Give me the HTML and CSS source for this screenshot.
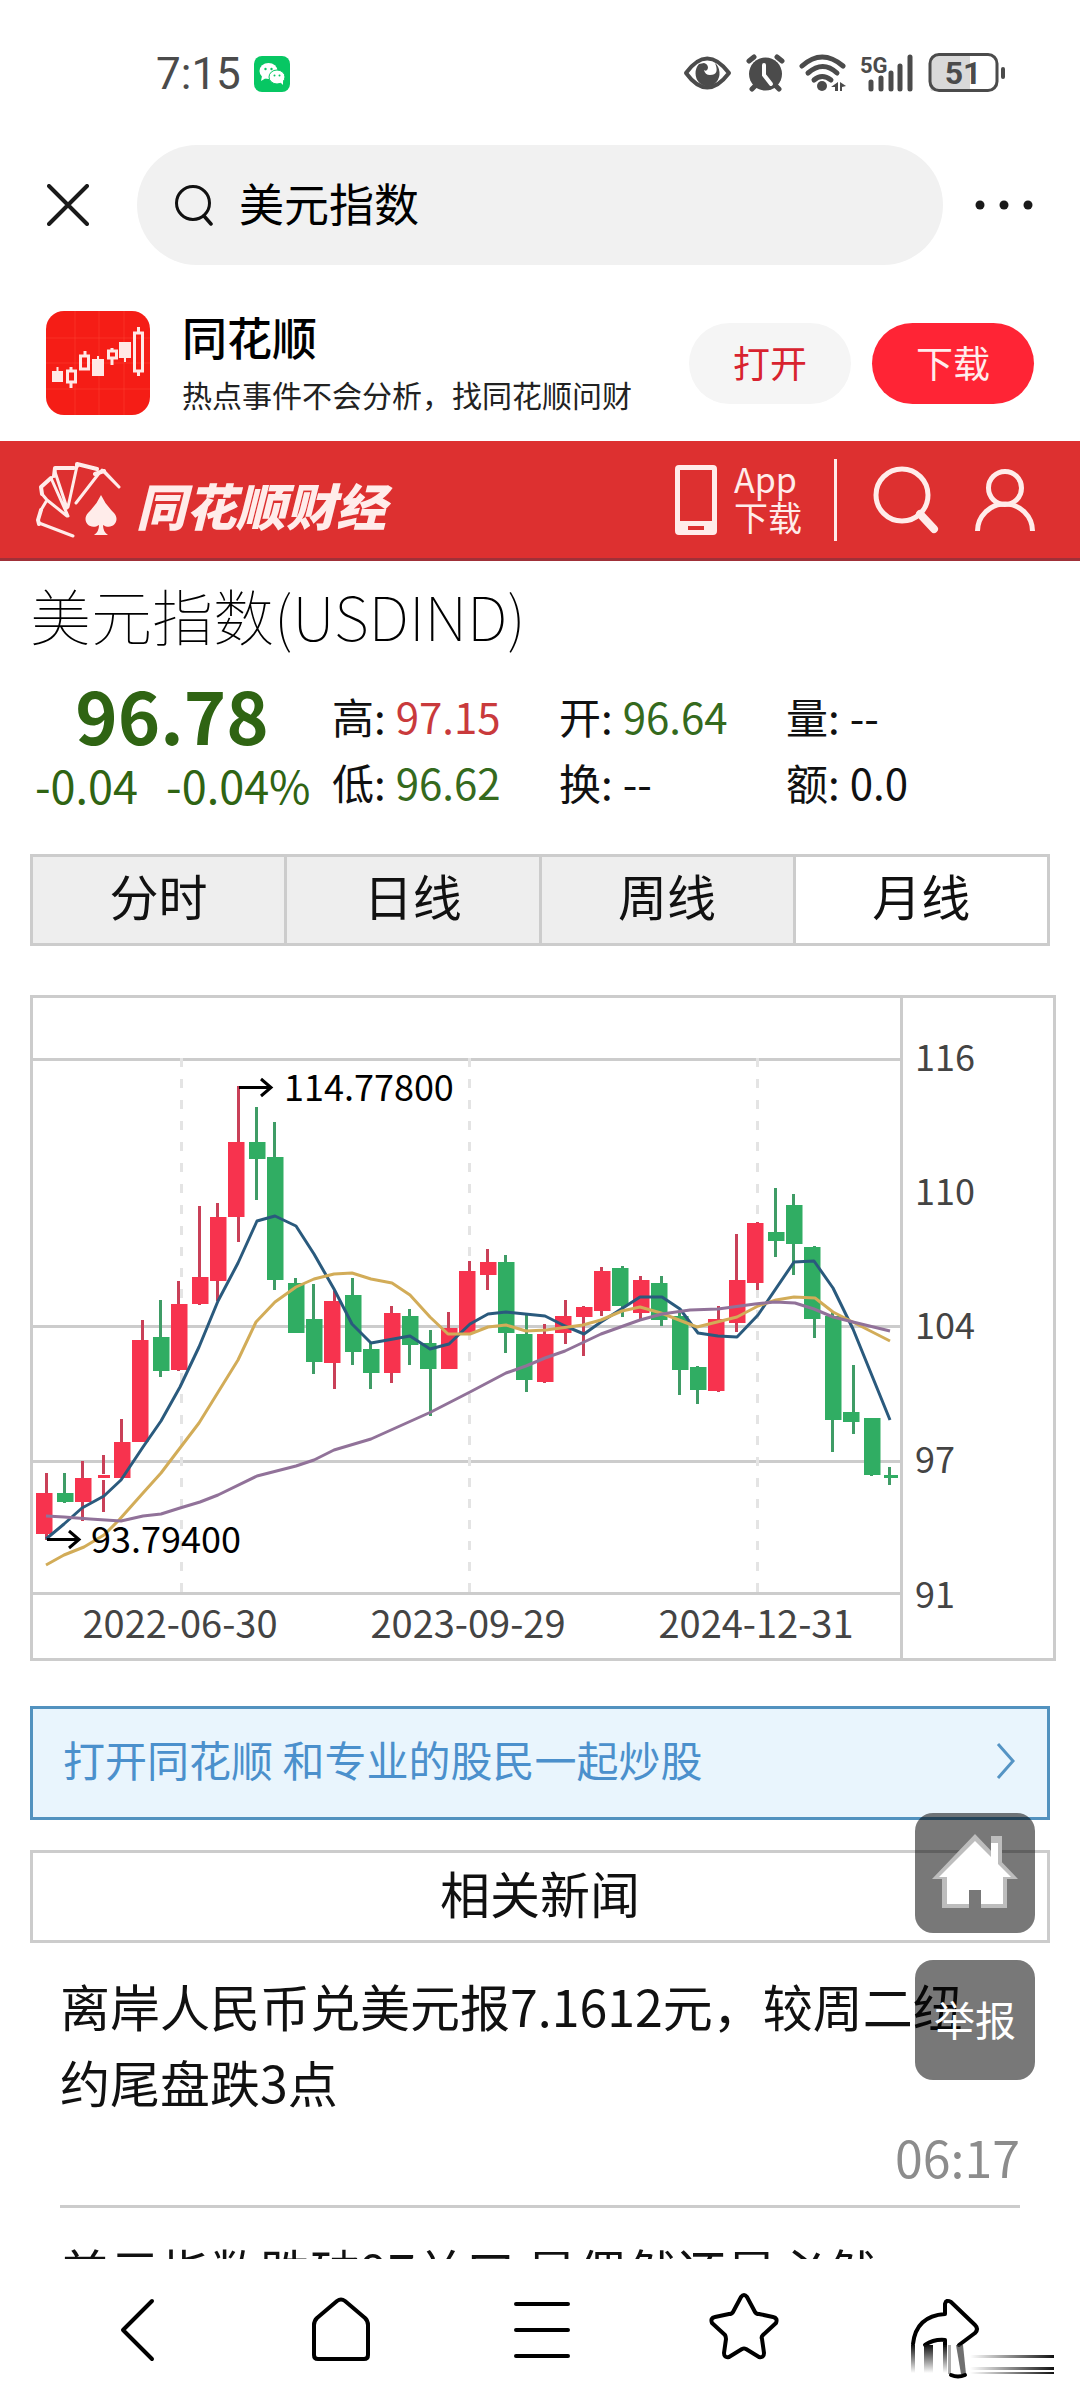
FILE: index.html
```html
<!DOCTYPE html>
<html lang="zh-CN">
<head>
<meta charset="utf-8">
<meta name="viewport" content="width=device-width">
<title>美元指数</title>
<link rel="stylesheet" href="styles.css">
</head>
<body>
<div class="app">
  <div class="status">
    <span class="clock">7:15</span>
    <svg class="wechat" viewBox="0 0 36 36" width="36" height="36" aria-hidden="true">
      <rect width="36" height="36" rx="8" fill="#07c763"/>
      <ellipse cx="14.500" cy="15" rx="9" ry="8" fill="#fff"/><path d="M8 20l-1 5 5-3z" fill="#fff"/>
      <ellipse cx="23" cy="21" rx="8" ry="7" fill="#fff" stroke="#07c763"/><path d="M26 26l3 3v-5z" fill="#fff"/>
      <g fill="#07c763"><circle cx="11.500" cy="13" r="1.200"/><circle cx="17.500" cy="13" r="1.200"/><circle cx="20.500" cy="19.500" r="1"/><circle cx="25.500" cy="19.500" r="1"/></g>
    </svg>
    <svg class="indicators" viewBox="682 50 326 48" width="326" height="48" role="img" aria-label="5G 51%">
      <g fill="none" stroke="#4b4b4b" stroke-width="4" stroke-linecap="round" stroke-linejoin="round">
        <path d="M686 73q21-29 43 0q-22 29-43 0z"/>
        <path d="M749 61l5-4M782 61l-5-4" stroke-width="5"/>
        <path d="M752 89l6-6M779 89l-6-6" stroke-width="5"/>
        <path d="M802 66q20-18 41 0" stroke-width="5"/><path d="M808 73q15-13 29 0" stroke-width="5"/><path d="M814 80q8-7 17 0" stroke-width="5"/>
        <path d="M871 82v7M881 78v11M891 73v16M900 66v23M910 57v32" stroke-width="5"/>
      </g>
      <path d="M699 64a12 13 0 1 0 16-1q5 12-5 12q-5 0-6-5 3 2 4-2 0-4-4-5z" fill="#4b4b4b"/>
      <circle cx="765.500" cy="74" r="16.500" fill="#4b4b4b"/>
      <path d="M764 65v10l7 9" fill="none" stroke="#fff" stroke-width="4" stroke-linecap="round"/>
      <circle cx="822" cy="86" r="5" fill="#4b4b4b"/>
      <path d="M831 87l7-5v9h-3v-4zM840 82l6 4-4 1v4h-2z" fill="#4b4b4b"/>
      <text x="860" y="73" class="net">5G</text>
      <path d="M932 56h38v35h-38q-2 0-2-6V62q0-6 2-6z" fill="#d9d9d9"/>
      <rect x="930" y="54.500" width="67" height="36" rx="9" fill="none" stroke="#4b4b4b" stroke-width="3"/>
      <rect x="1001" y="67" width="4" height="12" rx="2" fill="#4b4b4b"/>
      <text x="963" y="84" text-anchor="middle" class="battery">51</text>
    </svg>
  </div>

  <header class="search-row">
    <button class="plain" aria-label="关闭"><svg viewBox="0 0 42 42" width="42" height="42"><path d="M2 2l38 38M40 2L2 40" stroke="#1a1a1a" stroke-width="4" stroke-linecap="round"/></svg></button>
    <div class="search">
      <svg viewBox="0 0 38 42" width="38" height="42" aria-hidden="true"><circle cx="18" cy="19" r="16.500" fill="none" stroke="#111" stroke-width="3"/><path d="M29 32l7 8" stroke="#111" stroke-width="3.500" stroke-linecap="round"/></svg>
      <input type="text" aria-label="搜索" value="美元指数">
    </div>
    <button class="plain" aria-label="更多"><svg viewBox="0 0 58 10" width="58" height="10"><g fill="#1a1a1a"><circle cx="5" cy="5" r="4.500"/><circle cx="29" cy="5" r="4.500"/><circle cx="53" cy="5" r="4.500"/></g></svg></button>
  </header>

  <main class="page">
    <section class="banner">
      <svg viewBox="0 0 104 104" width="104" height="104" aria-hidden="true">
        <rect width="104" height="104" rx="18" fill="#f51d16"/>
        <path d="M0 27h104M0 52h104M0 78h104M29 0v104M53 0v104M78 0v104" stroke="#ff4434" stroke-opacity=".5"/>
        <g fill="#ffe9e6"><path d="M6 60h11v11H6zM10.500 56h2v5h-2zM46 48h12v17H46zM51 45h2v4h-2zM73 31h12v16H73zM78 46h2v5h-2z"/></g>
        <g fill="none" stroke="#ffe9e6" stroke-width="3"><path d="M21.500 60h8v11h-8zM25 56v4M25 72v5M34.500 45h8v13h-8zM39 40v5M62.500 40h8v7h-8zM66 37v3M66 48v6M88.500 22h8v38h-8zM92.500 16v6M92.500 60v5"/></g>
      </svg>
      <div class="banner-text">
        <h2>同花顺</h2>
        <p>热点事件不会分析，找同花顺问财</p>
      </div>
      <button class="pill">打开</button>
      <button class="pill pill-red">下载</button>
    </section>

    <nav class="site-bar">
      <a class="brand" href="#">
        <svg viewBox="0 0 90 76" width="90" height="76" aria-hidden="true">
          <g fill="none" stroke="#ffecea" stroke-linejoin="round" stroke-linecap="round">
            <path stroke-width="4" d="M7 48L4 58l1 4M8 32l-1-7 10-9M20 14l1-8h19M43 4v-2l20 5M61 12l9-3"/>
            <path stroke-width="3" d="M39 74L5 61M7 48l6-10M8 32l5 6L33 54M17 16l17 38M21 10L33 46M43 4L34 45M42 41L66 10M70 9l15 16M68 8l17 17"/>
          </g>
          <path d="M67 33q4 9 13 18c7 8-2 18-11 12q0 7 5 10H60q5-3 5-10c-9 6-18-4-11-12q9-9 13-18z" fill="#ffecea"/>
        </svg>
        <span>同花顺财经</span>
      </a>
      <a class="app-link" href="#">
        <svg viewBox="0 0 42 70" width="42" height="70" aria-hidden="true"><path fill-rule="evenodd" d="M4 0h34q4 0 4 4v62q0 4-4 4H4q-4 0-4-4V4q0-4 4-4zM5 5v51h32V5zM13 61v4h16v-4z" fill="#ffecea"/></svg>
        <span>App<br>下载</span>
      </a>
      <a class="bar-icon" href="#" aria-label="搜索"><svg viewBox="0 0 66 68" width="66" height="68"><circle cx="29" cy="29" r="26" fill="none" stroke="#ffecea" stroke-width="5"/><path d="M47 48L61 63" fill="none" stroke="#ffecea" stroke-width="8" stroke-linecap="round"/></svg></a>
      <a class="bar-icon" href="#" aria-label="我的"><svg viewBox="0 0 60 62" width="60" height="62"><g fill="none" stroke="#ffecea" stroke-width="5"><circle cx="30" cy="19" r="16.500"/><path d="M2.500 62a27.500 27 0 0 1 55 0"/></g></svg></a>
    </nav>

    <h1 class="title">美元指数(USDIND)</h1>

    <section class="quote">
      <div class="last">
        <strong>96.78</strong>
        <div class="change"><span>-0.04</span><span>-0.04%</span></div>
      </div>
      <dl class="stats">
        <div><dt>高:</dt><dd class="up">97.15</dd></div>
        <div><dt>开:</dt><dd class="down">96.64</dd></div>
        <div><dt>量:</dt><dd>--</dd></div>
        <div><dt>低:</dt><dd class="down">96.62</dd></div>
        <div><dt>换:</dt><dd>--</dd></div>
        <div><dt>额:</dt><dd>0.0</dd></div>
      </dl>
    </section>

    <div class="tabs">
      <button>分时</button><button>日线</button><button>周线</button><button class="active">月线</button>
    </div>

    <svg class="chart" viewBox="30 995 1026 666" role="img" aria-label="美元指数月线图">
      <g class="grid">
        <path d="M31.500 996.500h1023v663h-1023z"/>
        <path d="M901.500 998v661M33 1059.500h868M33 1326.500h868M33 1461.500h868M33 1593.500h868"/>
      </g>
      <path class="dash" d="M181.500 1058v535M469.500 1058v535M757.500 1058v535"/>
      <g class="red">
        <path class="wick" d="M46.500 1473v67M82.500 1461v60M103.500 1455v19M103.500 1480v32M121.500 1419v59M142.500 1320v30M178.500 1281v90M199.500 1206v99M217.500 1203v98M238.500 1086v156M334.500 1291v98M391.500 1306v77M448.500 1312v30M469.500 1261v30M487.500 1249v41M544.500 1324v59M565.500 1300v44M583.500 1306v50M601.500 1267v49M640.500 1276v44M718.500 1306v86M736.500 1234v98M757.500 1222v68"/>
        <path d="M36 1493h16.500v41H36zM75 1478h16.500v24H75zM98 1475h12v3H98zM114 1442h16.500v36H114zM132 1340h16.500v102H132zM171 1304h16.500v66H171zM192 1277h16.500v27H192zM210 1217h16.500v64H210zM228 1142h16.500v75H228zM324 1301h16.500v62H324zM384 1313h16.500v60H384zM441 1328h16.500v41H441zM459 1271h16.500v62H459zM480 1262h16.500v13H480zM537 1334h16.500v48H537zM555 1316h16.500v17H555zM576 1307h16.500v10H576zM594 1271h16.500v40H594zM633 1280h16.500v33H633zM708 1319h16.500v72H708zM729 1280h16.500v43H729zM747 1223h16.500v60H747z"/>
      </g>
      <g class="green">
        <path class="wick" d="M64.500 1473v30M160.500 1300v77M256.500 1107v93M274.500 1122v168M295.500 1278v30M313.500 1284v90M352.500 1278v87M370.500 1343v46M409.500 1309v56M430.500 1330v86M505.500 1255v98M526.500 1315v77M622.500 1266v51M661.500 1276v50M679.500 1313v82M697.500 1366v38M775.500 1188v69M793.500 1194v81M814.500 1246v92M832.500 1312v140M853.500 1365v69M871.500 1450v26M889.500 1467v18"/>
        <path d="M57 1493h16.500v9H57zM153 1337h16.500v34H153zM249 1142h16.500v17H249zM267 1157h16.500v123H267zM288 1283h16.500v50H288zM306 1319h16.500v43H306zM345 1295h16.500v57H345zM363 1349h16.500v24H363zM402 1316h16.500v29H402zM420 1343h16.500v26H420zM498 1262h16.500v71H498zM516 1334h16.500v46H516zM612 1268h16.500v38H612zM651 1283h16.500v37H651zM672 1316h16.500v54H672zM690 1367h16.500v23H690zM768 1232h16.500v9H768zM786 1205h16.500v39H786zM804 1247h16.500v72H804zM825 1316h16.500v104H825zM843 1412h16.500v10H843zM864 1418h16.500v57H864zM884 1475h14v3H884z"/>
      </g>
      <g class="ma">
        <polyline stroke="#2a5a7d" points="46,1539 64,1524 82,1508 104,1496 121,1480 143,1447 161,1421 180,1387 199,1347 218,1301 238,1263 257,1221 275,1216 296,1226 314,1254 334,1289 352,1324 371,1343 410,1336 430,1349 449,1344 470,1324 488,1314 506,1312 545,1316 565,1326 584,1334 601,1322 640,1297 662,1297 680,1309 698,1333 718,1336 737,1337 758,1315 794,1262 814,1261 833,1288 853,1329 890,1420"/>
        <polyline stroke="#d2ac58" points="46,1565 64,1555 84,1547 104,1535 119,1520 143,1493 161,1473 199,1423 238,1360 256,1322 275,1302 296,1287 314,1279 334,1274 352,1273 371,1279 392,1283 410,1295 430,1317 448,1334 470,1334 488,1327 506,1325 526,1331 546,1330 583,1325 601,1320 622,1311 640,1307 661,1313 697,1327 737,1317 758,1306 776,1300 794,1297 815,1298 833,1312 890,1341"/>
        <polyline stroke="#917299" points="46,1516 64,1517 90,1519 121,1521 143,1516 161,1514 180,1508 200,1502 218,1495 257,1476 296,1466 314,1460 334,1450 371,1439 431,1412 470,1392 506,1373 526,1366 545,1358 565,1351 601,1334 640,1320 662,1314 690,1310 718,1309 755,1304 775,1302 795,1303 814,1309 833,1317 853,1322 890,1331"/>
      </g>
      <path class="arrow" d="M239 1087.500h32M261 1079l10 8.500-10 8.500M47 1539.500h32M69 1531l10 8.500-10 8.500"/>
      <g class="mark"><text x="284" y="1101">114.77800</text><text x="91" y="1553">93.79400</text></g>
      <g class="axis">
        <text x="915" y="1071">116</text><text x="915" y="1205">110</text><text x="915" y="1339">104</text><text x="915" y="1473">97</text><text x="915" y="1608">91</text>
      </g>
      <g class="dates">
        <text x="180" y="1638">2022-06-30</text><text x="468" y="1638">2023-09-29</text><text x="756" y="1638">2024-12-31</text>
      </g>
    </svg>

    <a class="promo" href="#">打开同花顺 和专业的股民一起炒股
      <svg viewBox="0 0 20 38" width="20" height="38" aria-hidden="true"><path d="M2 2l15 17L2 36" fill="none" stroke="#5594c4" stroke-width="3"/></svg>
    </a>

    <section class="news">
      <h2>相关新闻</h2>
      <article><a href="#">离岸人民币兑美元报7.1612元，较周二纽约尾盘跌3点</a><time>06:17</time></article>
      <article><a href="#">美元指数跌破97关口 是偶然还是必然</a></article>
    </section>
  </main>

  <div class="float">
    <button aria-label="首页"><svg viewBox="0 0 88 80" width="88" height="80"><path d="M44 3L87 48H76v29H50V59H38v18H11V48H1z" fill="#bdbdbd"/><path d="M60 5h11v26H60z" fill="#bdbdbd"/><path d="M44 10L80 46H72v27H50V59H38v14H16V46H8z" fill="#fff"/><path d="M60 12h7v28h-7z" fill="#fff"/></svg></button>
    <button>举报</button>
  </div>

  <nav class="toolbar">
    <button class="plain" aria-label="后退"><svg viewBox="0 0 70 84" width="70" height="84"><path d="M48 13L19 42l29 29"/></svg></button>
    <button class="plain" aria-label="主页"><svg viewBox="0 0 70 84" width="70" height="84"><path d="M8 37q0-4 3-7L31 13q4-3 8 0l20 17q3 3 3 7v30q0 4-4 4H12q-4 0-4-4z"/></svg></button>
    <button class="plain" aria-label="菜单"><svg viewBox="0 0 70 84" width="70" height="84"><path d="M9 16h52M9 42h52M9 68h52"/></svg></button>
    <button class="plain" aria-label="收藏"><svg viewBox="0 0 70 84" width="70" height="84"><path d="M32 9q3-4 6 0l8 15q1 2 4 2l14 3q5 1 3 6L54 47q-2 2-1 4l2 14q0 5-5 4L37 61q-2-1-4 0l-13 8q-5 1-5-4l2-14q0-2-1-4L3 35q-2-5 3-6l14-3q3 0 4-2z"/></svg></button>
    <button class="plain" aria-label="分享"><svg viewBox="32 0 70 84" width="70" height="84">
      <defs>
        <linearGradient id="down" x1="0" y1="0" x2="0" y2="1"><stop stop-color="#111"/><stop offset="1" stop-color="#111" stop-opacity="0"/></linearGradient>
        <linearGradient id="across"><stop stop-color="#111" stop-opacity="0"/><stop offset="1" stop-color="#111"/></linearGradient>
      </defs>
      <path d="M35 56q3-28 32-30V16q1-5 6-2l24 23q4 4 0 8L81 57M47 57q9-6 20-5v5"/>
      <g stroke="none"><path fill="url(#down)" d="M33 57h4v28h-4zM46 57h9v28h-9zM65 57h4v28h-4z"/><path fill="#333" fill-opacity=".7" d="M78 57h7l3 29h-5z"/><path fill="#333" fill-opacity=".4" d="M70 57h3v29h-3z"/>
      <path fill="url(#across)" d="M92 67h84v3H92zM92 79h84v3H92zM92 84h84v2H92z"/></g>
      <path d="M73 87q7 3 14 0"/>
    </svg></button>
  </nav>
</div>
</body>
</html>
```
FILE: styles.css
```css
* { box-sizing: border-box; }

body {
  margin: 0;
  background: #fff;
  color: #111;
  font-family: "Noto Sans CJK SC", "Noto Sans", sans-serif;
}

h1, h2, p, dl, dd { margin: 0; }
a { color: inherit; text-decoration: none; }
button, input { font: inherit; color: inherit; border: 0; background: none; padding: 0; }
svg { display: block; flex: none; }

.app {
  position: relative;
  display: flex;
  flex-direction: column;
  height: 100vh;
  overflow: hidden;
}

.status {
  display: flex;
  align-items: center;
  height: 96px;
  padding: 52px 72px 0 156px;
  color: #4b4b4b;
}
.clock { font: 44px/44px Roboto, sans-serif; }
.wechat { margin-left: 13px; }
.indicators { margin-left: auto; }
.net { font: bold 22px Roboto, sans-serif; fill: #4b4b4b; }
.battery { font: bold 32px Roboto, sans-serif; fill: #4b4b4b; }

.plain { display: flex; align-items: center; justify-content: center; }

.search-row {
  display: flex;
  align-items: center;
  gap: 32px;
  margin-top: 49px;
  padding: 0 47px;
}
.search-row > .search { margin-left: 16px; }
.search {
  flex: 1;
  display: flex;
  align-items: center;
  gap: 26px;
  height: 120px;
  padding: 0 38px;
  border-radius: 60px;
  background: #f1f1f1;
}
.search input { flex: 1; min-width: 0; padding-bottom: 4px; font-size: 45px; line-height: 60px; color: #000; outline: 0; }

.page { flex: 1; min-height: 0; overflow: hidden; }

.banner {
  display: flex;
  align-items: flex-start;
  padding: 46px 46px 14px;
}
.banner > svg { margin-bottom: 12px; }
.banner-text { flex: 1; margin-left: 32px; white-space: nowrap; }
.banner h2 { font-size: 45px; line-height: 52px; font-weight: 500; color: #000; }
.banner p { font-size: 30px; line-height: 62px; color: #222; }
.pill {
  width: 162px;
  height: 81px;
  margin-top: 12px;
  padding-bottom: 4px;
  border-radius: 41px;
  background: #f5f5f5;
  color: #d8232f;
  font-size: 37px;
}
.pill-red { margin-left: 21px; background: #ff2435; color: #ffecec; }

.site-bar {
  display: flex;
  align-items: center;
  height: 120px;
  padding: 0 45px 0 34px;
  border-bottom: 3px solid #a03038;
  background: #dd3030;
  color: #ffecea;
}
.brand { display: flex; align-items: center; gap: 12px; margin-right: auto; }
.brand span { margin-top: 8px; font-size: 50px; line-height: 60px; font-weight: 900; font-style: italic; }
.app-link {
  display: flex;
  align-items: center;
  gap: 17px;
  height: 82px;
  padding-right: 32px;
  border-right: 3px solid #ffecea;
  font-size: 34px;
  line-height: 38px;
}
.app-link span { padding-bottom: 4px; }
.bar-icon { margin-left: 36px; }

.title {
  padding: 14px 30px 4px;
  font-size: 61px;
  line-height: 80px;
  font-weight: 100;
  color: #000;
}

.quote { display: flex; height: 195px; padding: 0 31px; color: #2f6413; }
.last { width: 301px; white-space: nowrap; }
.last strong { display: block; width: 282px; text-align: center; font-size: 72px; line-height: 110px; }
.change { display: flex; gap: 28px; padding-left: 4px; font-size: 45px; line-height: 32px; }
.stats {
  flex: 1;
  display: grid;
  grid-template-columns: repeat(3, 227px);
  grid-auto-rows: 66px;
  padding-top: 24px;
  color: #111;
  font-size: 42px;
  line-height: 66px;
}
.stats div { display: flex; gap: 10px; }
.up { color: #c93a3c; }
.down { color: #356a1d; }

.tabs { display: flex; margin: 0 30px; border: 3px solid #ccc; border-right-width: 0; }
.tabs button {
  flex: 1;
  height: 86px;
  padding-bottom: 10px;
  border-right: 3px solid #ccc;
  background: #eee;
  font-size: 49px;
  line-height: 76px;
}
.tabs .active { background: #fff; }

.chart { width: calc(100% - 54px); height: auto; margin: 49px 24px 0 30px; }
.grid, .dash, .arrow, .ma { fill: none; }
.grid { stroke: #ccc; stroke-width: 3; }
.dash { stroke: #e4e4e4; stroke-width: 3; stroke-dasharray: 9 12; }
.wick { stroke-width: 3; }
.red { fill: #f7334e; }
.red .wick { stroke: #c94058; }
.green { fill: #30ad63; }
.green .wick { stroke: #3f9c66; }
.ma { stroke-width: 3; stroke-linejoin: round; }
.arrow { stroke: #000; stroke-width: 3; }
.mark, .axis { font-size: 36px; fill: #000; }
.axis, .dates { fill: #444; }
.dates { font-size: 38px; text-anchor: middle; }

.promo {
  display: flex;
  align-items: center;
  justify-content: space-between;
  height: 114px;
  margin: 45px 30px 0;
  padding: 0 31px 10px 30px;
  border: 3px solid #5292bf;
  background: #e9f5fd;
  color: #4b90cc;
  font-size: 42px;
}
.promo svg { margin-top: 6px; }

.news h2 {
  height: 93px;
  margin: 30px 30px 0;
  border: 3px solid #ccc;
  font-size: 50px;
  line-height: 78px;
  font-weight: 400;
  text-align: center;
}
.news article { margin: 0 60px; padding: 24px 0 12px; border-bottom: 3px solid #ccc; font-size: 50px; line-height: 76px; }
.news article a { display: block; padding-right: 20px; }
.news time { display: block; line-height: 74px; text-align: right; color: #8c8c8c; }

.float {
  position: absolute;
  right: 45px;
  bottom: 320px;
  display: grid;
  gap: 27px;
}
.float button {
  display: flex;
  align-items: center;
  justify-content: center;
  width: 120px;
  height: 120px;
  padding-bottom: 4px;
  border-radius: 18px;
  background: rgba(0, 0, 0, .53);
  color: #fff;
  font-size: 41px;
}

.toolbar {
  display: flex;
  justify-content: space-between;
  height: 141px;
  padding: 0 100px 0 104px;
  background: #fff;
}
.toolbar svg { fill: none; stroke: #000; stroke-width: 4; stroke-linecap: round; stroke-linejoin: round; overflow: visible; }
```
